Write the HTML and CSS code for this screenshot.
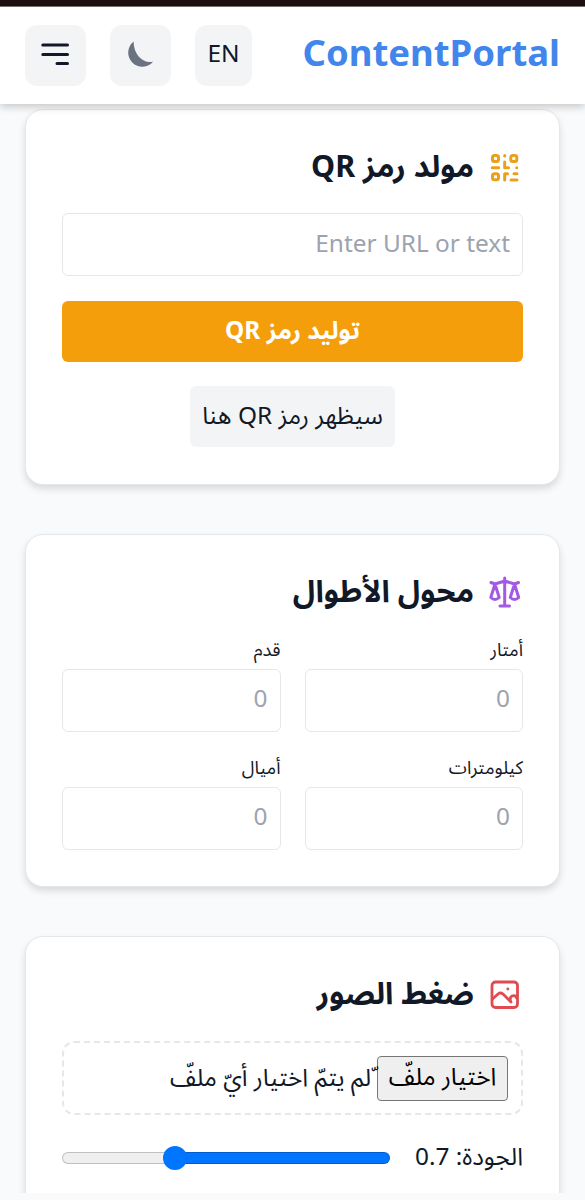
FILE: index.html
```
<!DOCTYPE html>
<html lang="ar" dir="rtl">
<head>
    <meta charset="UTF-8">
    <meta name="viewport" content="width=device-width, initial-scale=1.0">
    <title>ContentPortal</title>
    <link rel="stylesheet" href="styles.css">
</head>
<body>

<div class="status-strip"></div>

<header class="header">
    <div class="logo">ContentPortal</div>
    <div class="actions">
        <button type="button" class="action-btn lang-btn">EN</button>
        <button type="button" class="action-btn" aria-label="Theme">
            <svg width="30" height="30" viewBox="0 0 30 30"><path d="M8.5 1A14 14 0 1 0 28 20.8C19 24 8 14 8.5 1Z" fill="#6b7280" transform="translate(-.8 .6)"/></svg>
        </button>
        <button type="button" class="action-btn" aria-label="Menu">
            <svg width="30" height="30" viewBox="0 0 30 30" fill="none" stroke="#111827" stroke-width="3" stroke-linecap="round"><path d="M1.8 5.1H26.5M1.8 14.4H26.5M16 23.5H26.5"/></svg>
        </button>
    </div>
</header>

<main class="main">
    <section class="card">
        <h2>
            <svg class="icon" viewBox="0 0 36 36" fill="none" stroke="#e9a11b" stroke-width="3" stroke-linecap="round" stroke-linejoin="round">
                <rect x="5.5" y="5.5" width="6" height="6" rx="2"/>
                <rect x="23.8" y="5.5" width="6" height="6" rx="2"/>
                <rect x="5.5" y="23.8" width="6" height="6" rx="2"/>
                <path d="M17.7 5.4V6M17.7 12V17.7H21.5M5.2 17.7H11.7M29.7 17.7H29.8M17.7 30V23.8H20.5M27 23.8H30M24 30H30"/>
            </svg>
            <span>مولد رمز QR</span>
        </h2>
        <input type="text" class="field" placeholder="Enter URL or text">
        <button type="button" class="generate-btn">توليد رمز QR</button>
        <div class="qr-output">سيظهر رمز QR هنا</div>
    </section>

    <section class="card">
        <h2>
            <svg class="icon" viewBox="0 0 36 36" fill="none" stroke="#a259e6" stroke-width="3" stroke-linecap="round" stroke-linejoin="round">
                <path d="M17.7 4V32M13 32H22.5M4 8.5L8 10L17.7 7L27.5 10L31.5 8.5M8 10L3.8 23.5Q8 27.5 12.2 23.5ZM27.5 10L23.3 23.5Q27.5 27.5 31.7 23.5Z"/>
            </svg>
            <span>محول الأطوال</span>
        </h2>
        <div class="converter">
            <label>أمتار<input type="number" class="field" placeholder="0"></label>
            <label>قدم<input type="number" class="field" placeholder="0"></label>
            <label>كيلومترات<input type="number" class="field" placeholder="0"></label>
            <label>أميال<input type="number" class="field" placeholder="0"></label>
        </div>
    </section>

    <section class="card">
        <h2>
            <svg class="icon" viewBox="0 0 36 36" fill="none" stroke="#df4b4e" stroke-width="2.8" stroke-linecap="round" stroke-linejoin="round">
                <rect x="5" y="5" width="25.5" height="25.5" rx="3.5"/>
                <path d="M5.5 22L11 17Q13.5 15 16 17L24 25M30 21.5Q28.5 17.5 25 19Q22.5 20.5 23.5 24M20.8 12H20.9"/>
            </svg>
            <span>ضغط الصور</span>
        </h2>
        <div class="drop-zone">
            <button type="button" class="file-btn">اختيار ملفّ</button>
            <span class="file-name">ّلم يتمّ اختيار أيّ ملفّ</span>
        </div>
        <div class="quality">
            <span class="quality-label">الجودة: 0.7</span>
            <input type="range" class="slider" min="0.1" max="1" step="0.1" value="0.7">
        </div>
    </section>
</main>

</body>
</html>
```
FILE: styles.css
```
* {
    box-sizing: border-box;
}

body {
    margin: 0;
    height: 1200px;
    overflow: hidden;
    background-color: #f9fafb;
    color: #111827;
    font-family: "Noto Sans", "Noto Sans Arabic", "DejaVu Sans", sans-serif;
    font-size: 24.4px;
}

button, input {
    font-family: inherit;
    font-size: inherit;
    color: inherit;
}

.status-strip {
    height: 7px;
    background-color: #1e1010;
    border-bottom: 1px solid #777;
}

.header {
    position: relative;
    display: flex;
    align-items: center;
    justify-content: space-between;
    height: 97px;
    padding: 0 25px;
    background-color: #fff;
    box-shadow: 0 3px 8px rgba(0, 0, 0, 0.2);
}

.logo {
    padding-bottom: 7px;
    color: #4285eb;
    font-size: 36.5px;
    font-weight: bold;
    line-height: 56px;
}

.actions {
    display: flex;
    gap: 24px;
}

.action-btn {
    display: flex;
    align-items: center;
    justify-content: center;
    width: 61px;
    height: 61px;
    padding: 0 0 1px;
    background-color: #f3f4f6;
    border: none;
    border-radius: 12px;
}

.lang-btn {
    width: 57px;
    padding-bottom: 6px;
}

.main {
    display: flex;
    flex-direction: column;
    gap: 49px;
    height: 1089px;
    padding: 5px 25px 0;
    overflow: hidden;
}

.card {
    flex-shrink: 0;
    padding: 36px 36px 36.5px;
    background-color: #fff;
    border: 1px solid #e5e7eb;
    border-radius: 18px;
    box-shadow: 0 4px 7px rgba(0, 0, 0, 0.13);
}

h2 {
    display: flex;
    align-items: center;
    gap: 13px;
    height: 43px;
    margin: 0 0 24px;
    font-size: 30.5px;
    line-height: 43px;
    white-space: nowrap;
}

h2 span {
    padding-bottom: 4px;
}

.icon {
    width: 36px;
    height: 36px;
}

.field {
    display: block;
    width: 100%;
    height: 63px;
    padding: 0 12px 5px;
    background-color: #fff;
    border: 1px solid #e5e7eb;
    border-radius: 6px;
    text-align: right;
    appearance: textfield;
}

.field::placeholder {
    color: #9ca3af;
}

.generate-btn {
    width: 100%;
    height: 61px;
    margin-top: 25px;
    padding-bottom: 3px;
    background-color: #f59e0b;
    color: #fff;
    border: none;
    border-radius: 6px;
    font-weight: bold;
}

.qr-output {
    width: 205px;
    height: 61px;
    margin: 24px auto 0;
    background-color: #f3f4f6;
    border-radius: 6px;
    line-height: 57px;
    text-align: center;
    white-space: nowrap;
}

.converter {
    display: grid;
    grid-template-columns: 1fr 1fr;
    gap: 24px;
}

label {
    height: 94px;
    font-size: 18.3px;
    line-height: 22px;
}

label .field {
    margin-top: 9px;
    font-size: 24.4px;
}

.drop-zone {
    display: flex;
    align-items: center;
    height: 74px;
    margin-top: 25px;
    padding: 0 13px;
    border: 2px dashed #e5e7eb;
    border-radius: 12px;
    white-space: nowrap;
}

.file-btn {
    width: 131px;
    height: 45px;
    padding: 0 0 4px;
    background-color: #efefef;
    border: 1px solid #767676;
    border-radius: 4px;
    color: #000;
    line-height: 36px;
}

.file-name {
    margin-right: 6px;
}

.quality {
    display: flex;
    align-items: center;
    gap: 24px;
    height: 36px;
    margin: 25px 0 24px;
    white-space: nowrap;
}

.quality-label {
    width: 109px;
    padding-bottom: 2px;
}

.slider {
    flex: 1;
    min-width: 0;
    height: 12px;
    margin: 0;
    appearance: none;
    background: linear-gradient(to left, #0075ff 65.5%, #efefef 65.5%);
    border-radius: 6px;
    box-shadow: inset 0 0 0 1px rgba(0, 0, 0, 0.2);
}

.slider::-webkit-slider-thumb {
    appearance: none;
    width: 24px;
    height: 24px;
    background-color: #0075ff;
    border-radius: 50%;
}
```
